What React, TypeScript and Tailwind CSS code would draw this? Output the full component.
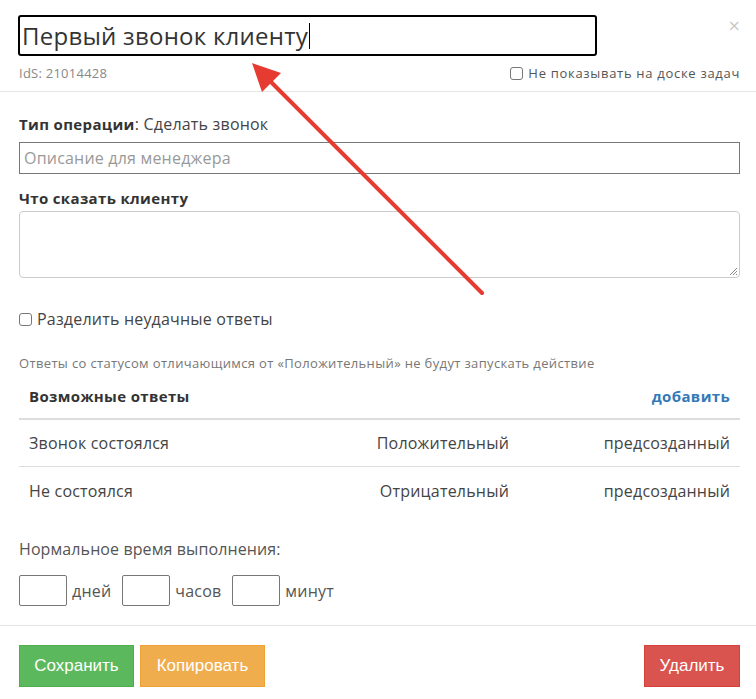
import React from "react";

export default function App() {
  const answers = [
    { name: "Звонок состоялся", status: "Положительный" },
    { name: "Не состоялся", status: "Отрицательный" },
  ];

  return (
    <div className="relative w-[756px] h-[699px] bg-white text-[#555] overflow-hidden font-['Open_Sans','Noto_Sans',sans-serif]">
      {/* Header */}
      <div className="relative pl-[18px] pr-[16px] pt-[15px] pb-[9px] border-b border-[#e5e5e5]">
        <div className="flex items-center w-[579px] h-[41px] border-2 border-black rounded-[3px] px-[2px]">
          <span className="text-[24px] tracking-[0.25px] text-[#333] leading-none">Первый звонок клиенту</span>
          <span className="w-px h-[26px] bg-black ml-px" />
        </div>
        <div className="flex items-center justify-between mt-[8px] leading-[18px] text-[13px]">
          <span className="text-[#888] pl-px tracking-[0.25px]">IdS: 21014428</span>
          <label className="flex items-center gap-[5px] text-[#555] tracking-[0.7px]">
            <span className="w-[13px] h-[13px] border border-[#777] rounded-[3px]" />
            Не показывать на доске задач
          </label>
        </div>
        <span className="absolute right-[16px] top-[16px] text-[20px] text-[#c8c8c8] leading-none">×</span>
      </div>

      {/* Body */}
      <div className="pl-[19px] pr-[16px] pt-[22px] pb-[19px] border-b border-[#e5e5e5] text-[16px] tracking-[0.2px] leading-[20px]">
        <div className="text-[#444]">
          <b className="font-bold text-[15px] tracking-[0.35px] text-[#333]">Тип операции</b>: Сделать звонок
        </div>
        <div className="mt-[8px] h-[32px] border border-[#777] flex items-center px-[4px] text-[#999]">
          Описание для менеджера
        </div>
        <div className="mt-[14px] font-bold text-[15px] tracking-[0.35px] text-[#333]">Что сказать клиенту</div>
        <div className="relative mt-[3px] h-[67px] border border-[#ccc] rounded-[4px]">
          <svg className="absolute right-[1px] bottom-[1px]" width="9" height="9" viewBox="0 0 9 9">
            <path d="M8 1 L1 8 M8 4 L4 8 M8 7 L7 8" stroke="#888" strokeWidth="1" />
          </svg>
        </div>
        <label className="mt-[31px] flex items-center gap-[5px] text-[#444]">
          <span className="w-[13px] h-[13px] border border-[#777] rounded-[3px]" />
          Разделить неудачные ответы
        </label>
        <div className="mt-[25px] text-[13px] leading-[18px] tracking-[0.35px] text-[#777]">
          Ответы со статусом отличающимся от «Положительный» не будут запускать действие
        </div>

        {/* Answers table */}
        <div className="mt-[2px]">
          <div className="flex items-center justify-between h-[46px] px-[10px] border-b-2 border-[#ddd] text-[15px] tracking-[0.35px]">
            <span className="font-bold text-[#333]">Возможные ответы</span>
            <span className="font-bold text-[#337ab7]">добавить</span>
          </div>
          {answers.map((a, i) => (
            <div
              key={a.name}
              className={`grid grid-cols-[1fr_150px_221px] items-center h-[47px] px-[10px] text-[#444] ${i === 0 ? "border-b border-[#ddd]" : ""}`}
            >
              <span>{a.name}</span>
              <span className="text-right">{a.status}</span>
              <span className="text-right">предсозданный</span>
            </div>
          ))}
        </div>

        <div className="mt-[25px] text-[#555] tracking-[0.1px]">Нормальное время выполнения:</div>
        <div className="mt-[16px] flex items-center text-[#555]">
          <span className="w-[48px] h-[31px] border border-[#777] rounded-[2px]" />
          <span className="ml-[5px] mr-[11px]">дней</span>
          <span className="w-[48px] h-[31px] border border-[#777] rounded-[2px]" />
          <span className="ml-[5px] mr-[11px]">часов</span>
          <span className="w-[48px] h-[31px] border border-[#777] rounded-[2px]" />
          <span className="ml-[5px]">минут</span>
        </div>
      </div>

      {/* Footer */}
      <div className="flex items-center pl-[19px] pr-[16px] pt-[19px] font-['Liberation_Sans',Arial,sans-serif] text-[17px] text-white">
        <button className="w-[115px] h-[42px] bg-[#5cb85c] border border-[#4cae4c]">Сохранить</button>
        <button className="ml-[6px] w-[125px] h-[42px] bg-[#f0ad4e] border border-[#eea236]">Копировать</button>
        <button className="ml-auto w-[96px] h-[42px] bg-[#d9534f] border border-[#d43f3a]">Удалить</button>
      </div>

      {/* Annotation arrow */}
      <svg className="absolute left-0 top-0 pointer-events-none" width="756" height="699">
        <line x1="482" y1="293" x2="264" y2="75" stroke="#e53b30" strokeWidth="4" strokeLinecap="round" />
        <polygon points="252,63 281,73 262,92" fill="#e53b30" />
      </svg>
    </div>
  );
}
